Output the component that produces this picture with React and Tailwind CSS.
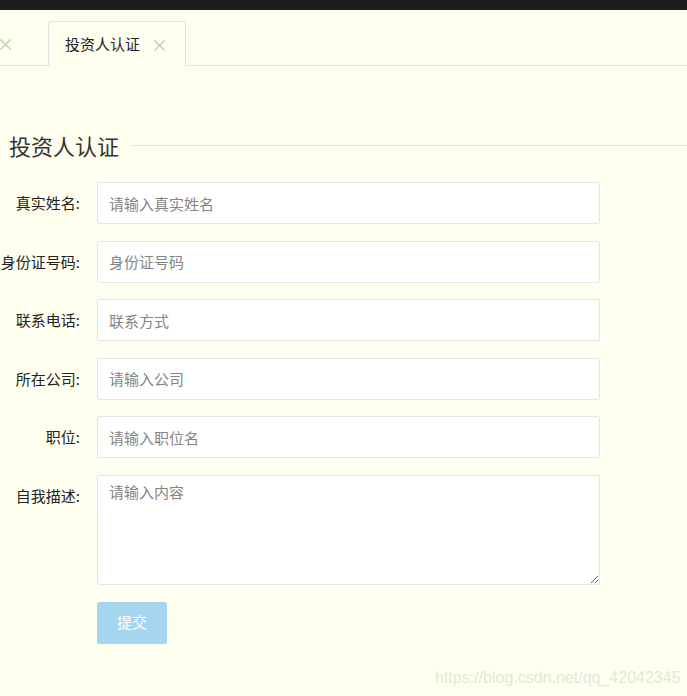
import React from "react";

const font = { fontFamily: '"Noto Sans CJK SC", "Noto Sans", sans-serif' };

function Row({ label, placeholder }) {
  return (
    <div className="flex items-start mb-[16.5px]">
      <label className="w-[97px] shrink-0 pr-[17px] text-right text-[15px] leading-[42px] text-[#222] whitespace-nowrap">
        {label}:
      </label>
      <input
        className="w-[503px] h-[42px] bg-white border border-[#e6e6e6] rounded-[2px] pl-[11px] text-[15px] outline-none placeholder:text-[#858585]"
        placeholder={placeholder}
      />
    </div>
  );
}

export default function App() {
  return (
    <div className="relative w-[687px] h-[696px] overflow-hidden bg-[#fffff0]" style={font}>
      <div className="h-[10px] bg-[#1c1c1c]" />
      {/* tab bar */}
      <div className="relative h-[56px] border-b border-[#e2e2e2] flex items-end">
        <div className="w-[48px] h-[44px] flex items-center">
          <span className="text-[#c2c2c2] text-[17px] leading-none ml-[-3px]">×</span>
        </div>
        <div className="h-[45px] w-[138px] mb-[-1px] border border-b-0 border-[#e2e2e2] bg-[#fffff0] flex items-center pl-[16px] rounded-t-[2px]">
          <span className="text-[15px] text-[#222]">投资人认证</span>
          <span className="ml-[11px] text-[#c2c2c2] text-[17px] leading-none">×</span>
        </div>
      </div>
      {/* legend */}
      <div className="flex items-center mt-[64px] mb-[22px]">
        <span className="pl-[9px] pr-[12px] text-[22px] leading-[30px] text-[#333]">投资人认证</span>
        <div className="flex-1 h-px bg-[#e2e2e2]" />
      </div>
      <div>
        <Row label="真实姓名" placeholder="请输入真实姓名" />
        <Row label="身份证号码" placeholder="身份证号码" />
        <Row label="联系电话" placeholder="联系方式" />
        <Row label="所在公司" placeholder="请输入公司" />
        <Row label="职位" placeholder="请输入职位名" />
        <div className="flex items-start mb-[17px]">
          <label className="w-[97px] shrink-0 pr-[17px] text-right text-[15px] leading-[42px] text-[#222]">
            自我描述:
          </label>
          <textarea
            className="w-[503px] h-[110px] bg-white border border-[#e6e6e6] rounded-[2px] pl-[11px] pt-[5px] text-[15px] outline-none placeholder:text-[#858585]"
            placeholder="请输入内容"
          />
        </div>
        <div className="pl-[97px]">
          <button className="w-[70px] h-[42px] rounded-[2px] bg-[#a6d5ef] text-white text-[15px]">提交</button>
        </div>
      </div>
      <div
        className="absolute left-[435px] top-[666px] text-[16px] text-[#e6e6dc] whitespace-nowrap"
        style={{ fontFamily: '"Liberation Sans", Arial, sans-serif' }}
      >
        https://blog.csdn.net/qq_42042345
      </div>
    </div>
  );
}
